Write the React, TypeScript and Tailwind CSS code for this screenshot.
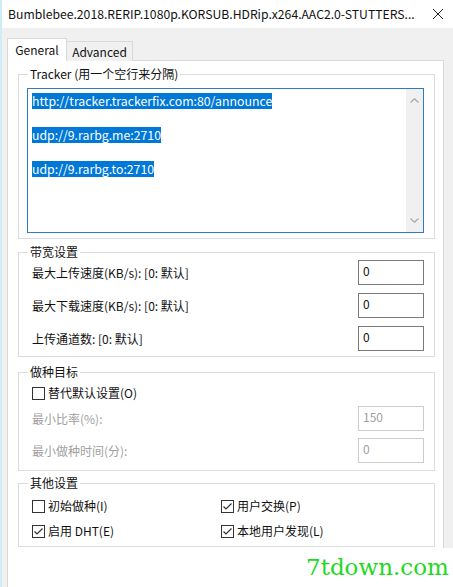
import { type ReactNode } from 'react'

const FONT = { fontFamily: '"Noto Sans CJK SC", "Noto Sans", sans-serif' }

function GroupBox({ title, className, children }: { title: string; className?: string; children: ReactNode }) {
  return (
    <fieldset className={`border border-[#dcdcdc] ${className ?? ''}`}>
      <legend className="ml-[9px] px-[2px] text-[12px] leading-[16px] text-[#111]">{title}</legend>
      {children}
    </fieldset>
  )
}

function NumBox({ value, disabled }: { value: string; disabled?: boolean }) {
  return (
    <div
      className={`h-[25px] w-[66px] border pl-[4px] pt-[2px] text-[12px] leading-[16px] ${
        disabled ? 'border-[#cccccc] text-[#a0a0a0]' : 'border-[#7a7a7a] text-[#111]'
      }`}
    >
      {value}
    </div>
  )
}

function CheckBox({ label, checked }: { label: string; checked?: boolean }) {
  return (
    <div className="flex h-[20px] items-center gap-[3px] text-[12px] text-[#111]">
      <span className="flex h-[13px] w-[13px] items-center justify-center border border-[#333] bg-white">
        {checked && (
          <svg viewBox="0 0 11 11" className="h-[11px] w-[11px]" fill="none" stroke="#333" strokeWidth="1.2">
            <polyline points="1.5,5.5 4,8 9.5,2.5" />
          </svg>
        )}
      </span>
      <span>{label}</span>
    </div>
  )
}

function Row({ label, value, disabled }: { label: string; value: string; disabled?: boolean }) {
  return (
    <div className="flex items-center justify-between">
      <span className={`text-[12px] ${disabled ? 'text-[#a0a0a0]' : 'text-[#111]'}`}>{label}</span>
      <NumBox value={value} disabled={disabled} />
    </div>
  )
}

const trackers = ['http://tracker.trackerfix.com:80/announce', '', 'udp://9.rarbg.me:2710', '', 'udp://9.rarbg.to:2710']

export default function App() {
  return (
    <div className="relative flex h-[587px] w-[453px] flex-col overflow-hidden border-l-2 border-[#cdeef5] bg-white" style={FONT}>
      {/* title bar */}
      <div className="flex h-[28px] items-center justify-between pl-[6px] pr-[9px]">
        <span className="text-[12.2px] text-[#111]">Bumblebee.2018.RERIP.1080p.KORSUB.HDRip.x264.AAC2.0-STUTTERS...</span>
        <svg viewBox="0 0 12 12" className="h-[12px] w-[12px]" fill="none" stroke="#222" strokeWidth="1">
          <path d="M1 1l10 10M11 1L1 11" />
        </svg>
      </div>

      <div className="flex flex-1 flex-col bg-[#f0f0f0] pl-[5px] pr-[9px] pt-[10px]">
        {/* tabs */}
        <div className="relative z-10 -mb-px flex h-[23px] items-end">
          <div className="flex h-[23px] w-[60px] items-center justify-center border border-b-0 border-[#d9d9d9] bg-white text-[12px] text-[#111]">
            General
          </div>
          <div className="flex h-[20px] w-[66px] items-center justify-center border border-b-0 border-l-0 border-[#d9d9d9] bg-[#f0f0f0] text-[12px] text-[#111]">
            Advanced
          </div>
        </div>

        {/* tab page */}
        <div className="flex flex-1 flex-col border border-b-0 border-[#d9d9d9] bg-white pl-[10px] pr-[8px] pt-[5px]">
          <GroupBox title="Tracker (用一个空行来分隔)">
            <div className="pb-[5px] pl-[8px] pr-[10px] pt-[6px]">
              <div className="flex h-[145px] border border-[#2e7bc4] bg-white">
                <div className="flex-1 pl-[4px] pt-[3px] text-[12.3px] text-white">
                  {trackers.map((t, i) => (
                    <div key={i} className="h-[17px]">
                      {t && <span className="inline-block h-[16px] bg-[#0078d7] leading-[16px]">{t}</span>}
                    </div>
                  ))}
                </div>
                <div className="flex w-[17px] flex-col items-center justify-between bg-[#f0f0f0] py-[9px]">
                  <svg viewBox="0 0 9 5" className="h-[5px] w-[9px]" fill="none" stroke="#a6a6a6" strokeWidth="1.2">
                    <polyline points="0.5,4.5 4.5,0.8 8.5,4.5" />
                  </svg>
                  <svg viewBox="0 0 9 5" className="h-[5px] w-[9px]" fill="none" stroke="#a6a6a6" strokeWidth="1.2">
                    <polyline points="0.5,0.5 4.5,4.2 8.5,0.5" />
                  </svg>
                </div>
              </div>
            </div>
          </GroupBox>

          <GroupBox title="带宽设置" className="mt-[5px]">
            <div className="flex flex-col gap-[8px] pb-[5px] pl-[13px] pr-[10px]">
              <Row label="最大上传速度(KB/s): [0: 默认]" value="0" />
              <Row label="最大下载速度(KB/s): [0: 默认]" value="0" />
              <Row label="上传通道数: [0: 默认]" value="0" />
            </div>
          </GroupBox>

          <GroupBox title="做种目标" className="mt-[7px]">
            <div className="pb-[7px] pl-[13px] pr-[10px]">
              <div className="mt-[3px]">
                <CheckBox label="替代默认设置(O)" />
              </div>
              <div className="mt-[3px] flex flex-col gap-[7px]">
                <Row label="最小比率(%):" value="150" disabled />
                <Row label="最小做种时间(分):" value="0" disabled />
              </div>
            </div>
          </GroupBox>

          <GroupBox title="其他设置" className="mt-[4px]">
            <div className="mt-[5px] grid grid-cols-[189px_1fr] gap-y-[5px] pb-[5px] pl-[13px] pr-[10px]">
              <CheckBox label="初始做种(I)" />
              <CheckBox label="用户交换(P)" checked />
              <CheckBox label="启用 DHT(E)" checked />
              <CheckBox label="本地用户发现(L)" checked />
            </div>
          </GroupBox>
        </div>
      </div>

      {/* watermark */}
      <div className="absolute bottom-0 left-[298px] right-0 top-[548px] bg-white pl-[6px] pt-[4px]">
        <span className="text-[23px] leading-[30px] text-[#1ed81e]" style={{ fontFamily: '"DejaVu Serif", serif' }}>
          7tdown.com
        </span>
      </div>
    </div>
  )
}
